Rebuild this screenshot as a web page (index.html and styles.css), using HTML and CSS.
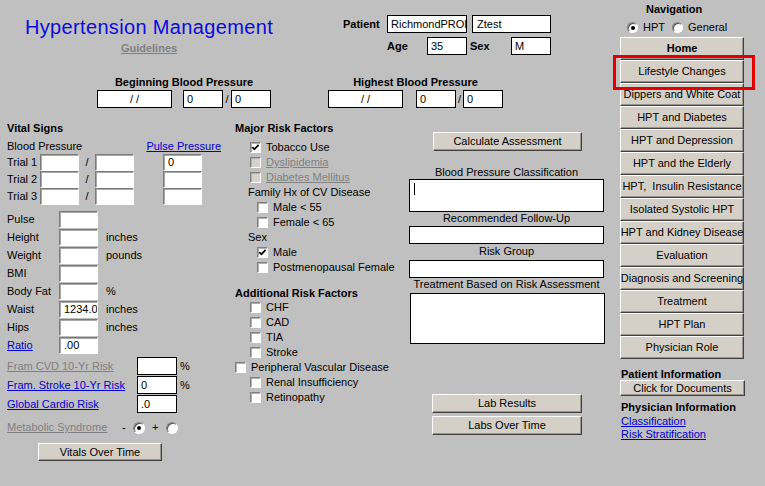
FILE: index.html
```html
<!DOCTYPE html>
<html>
<head>
<meta charset="utf-8">
<title>Hypertension Management</title>
<link rel="stylesheet" href="styles.css">
</head>
<body>
<div class="page">
  <div class="main">
    <header class="top">
      <div class="title-block">
        <h1 class="title">Hypertension Management</h1>
        <a class="guidelines">Guidelines</a>
      </div>
      <div class="patient">
        <div class="prow">
          <span class="plabel">Patient</span>
          <span class="field f-first">RichmondPROD</span>
          <span class="field f-last">Ztest</span>
        </div>
        <div class="prow prow2">
          <span class="plabel2">Age</span>
          <span class="field f-small">35</span>
          <span class="plabel3">Sex</span>
          <span class="field f-small">M</span>
        </div>
      </div>
    </header>

    <section class="bp">
      <div class="bp-group">
        <div class="bold bp-title">Beginning Blood Pressure</div>
        <div class="bp-inputs">
          <span class="field date">/ /</span>
          <span class="field num first-num">0</span>
          <span class="slash">/</span>
          <span class="field num">0</span>
        </div>
      </div>
      <div class="bp-group">
        <div class="bold bp-title">Highest Blood Pressure</div>
        <div class="bp-inputs">
          <span class="field date">/ /</span>
          <span class="field num first-num2">0</span>
          <span class="slash slash2">/</span>
          <span class="field num">0</span>
        </div>
      </div>
    </section>

    <div class="cols">
      <div class="vitals">
        <div class="bold head">Vital Signs</div>
        <div class="bp-head"><span>Blood Pressure</span><a class="link">Pulse Pressure</a></div>
        <div class="trials">
          <span>Trial 1</span><span class="inset"></span><span class="sl">/</span><span class="inset"></span><span></span><span class="inset">0</span>
          <span>Trial 2</span><span class="inset"></span><span class="sl">/</span><span class="inset"></span><span></span><span class="inset"></span>
          <span>Trial 3</span><span class="inset"></span><span class="sl">/</span><span class="inset"></span><span></span><span class="inset"></span>
        </div>
        <div class="measures">
          <span>Pulse</span><span class="inset"></span><span class="unit"></span>
          <span>Height</span><span class="inset"></span><span class="unit">inches</span>
          <span>Weight</span><span class="inset"></span><span class="unit">pounds</span>
          <span>BMI</span><span class="inset"></span><span class="unit"></span>
          <span>Body Fat</span><span class="inset"></span><span class="unit">%</span>
          <span>Waist</span><span class="inset">1234.00</span><span class="unit">inches</span>
          <span>Hips</span><span class="inset"></span><span class="unit">inches</span>
          <span><a class="link">Ratio</a></span><span class="inset">.00</span><span class="unit"></span>
        </div>
        <div class="fram">
          <span><a class="dis-link">Fram CVD 10-Yr Risk</a></span><span class="field"></span><span class="unit2">%</span>
          <span><a class="link">Fram. Stroke 10-Yr Risk</a></span><span class="field">0</span><span class="unit2">%</span>
          <span><a class="link">Global Cardio Risk</a></span><span class="field">.0</span><span class="unit2"></span>
        </div>
        <div class="meta">
          <a class="dis-link meta-label">Metabolic Syndrome</a>
          <span class="minus">-</span>
          <span class="radio"><span class="dot"></span></span>
          <span class="plus">+</span>
          <span class="radio"></span>
        </div>
        <div class="btn vot">Vitals Over Time</div>
      </div>

      <div class="risk">
        <div class="bold head">Major Risk Factors</div>
        <div class="cb-row i15 first-row"><span class="cb"><svg viewBox="0 0 9 9" width="9" height="9"><path d="M1.3 4.1 L3.4 6.3 L7.6 1.8" fill="none" stroke="#000" stroke-width="1.8"/></svg></span><span>Tobacco Use</span></div>
        <div class="cb-row i15"><span class="cb dis"></span><a class="dis-link">Dyslipidemia</a></div>
        <div class="cb-row i15"><span class="cb dis"></span><a class="dis-link">Diabetes Mellitus</a></div>
        <div class="cb-row i13">Family Hx of CV Disease</div>
        <div class="cb-row i22"><span class="cb"></span><span>Male &lt; 55</span></div>
        <div class="cb-row i22"><span class="cb"></span><span>Female &lt; 65</span></div>
        <div class="cb-row i13">Sex</div>
        <div class="cb-row i22"><span class="cb"><svg viewBox="0 0 9 9" width="9" height="9"><path d="M1.3 4.1 L3.4 6.3 L7.6 1.8" fill="none" stroke="#000" stroke-width="1.8"/></svg></span><span>Male</span></div>
        <div class="cb-row i22"><span class="cb"></span><span>Postmenopausal Female</span></div>

        <div class="bold head add-head">Additional Risk Factors</div>
        <div class="cb-row i15"><span class="cb"></span><span>CHF</span></div>
        <div class="cb-row i15"><span class="cb"></span><span>CAD</span></div>
        <div class="cb-row i15"><span class="cb"></span><span>TIA</span></div>
        <div class="cb-row i15"><span class="cb"></span><span>Stroke</span></div>
        <div class="cb-row i0"><span class="cb"></span><span>Peripheral Vascular Disease</span></div>
        <div class="cb-row i15"><span class="cb"></span><span>Renal Insufficiency</span></div>
        <div class="cb-row i15"><span class="cb"></span><span>Retinopathy</span></div>
      </div>

      <div class="assess">
        <div class="btn calc">Calculate Assessment</div>
        <div class="a-label a-first">Blood Pressure Classification</div>
        <div class="abox box-class"><span class="caret"></span></div>
        <div class="a-label">Recommended Follow-Up</div>
        <div class="abox box-follow"></div>
        <div class="a-label a-gap">Risk Group</div>
        <div class="abox box-risk"></div>
        <div class="a-label a-gap0">Treatment Based on Risk Assessment</div>
        <div class="abox box-treat"></div>
        <div class="btn lab lab1">Lab Results</div>
        <div class="btn lab lab2">Labs Over Time</div>
      </div>
    </div>
  </div>

  <aside class="nav">
    <div class="bold nav-title">Navigation</div>
    <div class="nav-radios">
      <span class="radio"><span class="dot"></span></span><span class="rlabel">HPT</span>
      <span class="radio r2"></span><span class="rlabel">General</span>
    </div>
    <div class="nav-buttons">
      <div class="btn nbtn bold">Home</div>
      <div class="btn nbtn">Lifestyle Changes</div>
      <div class="btn nbtn">Dippers and White Coat</div>
      <div class="btn nbtn">HPT and Diabetes</div>
      <div class="btn nbtn">HPT and Depression</div>
      <div class="btn nbtn">HPT and the Elderly</div>
      <div class="btn nbtn">HPT,&nbsp; Insulin Resistance</div>
      <div class="btn nbtn">Isolated Systolic HPT</div>
      <div class="btn nbtn">HPT and Kidney Disease</div>
      <div class="btn nbtn">Evaluation</div>
      <div class="btn nbtn">Diagnosis and Screening</div>
      <div class="btn nbtn">Treatment</div>
      <div class="btn nbtn">HPT Plan</div>
      <div class="btn nbtn">Physician Role</div>
    </div>
    <div class="bold info-head">Patient Information</div>
    <div class="btn docs">Click for Documents</div>
    <div class="bold info-head2">Physician Information</div>
    <a class="link nav-link first-link">Classification</a>
    <a class="link nav-link">Risk Stratification</a>
    <div class="annot"></div>
  </aside>
</div>
</body>
</html>
```

FILE: styles.css
```css
* { box-sizing: border-box; }
html, body { margin: 0; padding: 0; }
body {
  background: #c0c0c0;
  font-family: "Liberation Sans", Arial, sans-serif;
  font-size: 11px;
  line-height: 13px;
  color: #000;
  width: 765px;
  height: 486px;
  overflow: hidden;
}
.page { display: flex; width: 765px; height: 486px; }
.main { width: 612px; }
.nav { width: 153px; position: relative; }
.bold { font-weight: bold; }

/* header */
.top { display: flex; height: 76px; }
.title-block { margin-left: 24px; width: 250px; text-align: center; }
.title {
  margin: 15px 0 0;
  font-size: 20px;
  line-height: 24px;
  font-weight: normal;
  color: #0b0bdc;
  letter-spacing: 0.35px;
  white-space: nowrap;
}
.guidelines {
  display: block;
  margin-top: 3px;
  font-weight: bold;
  color: #808080;
  text-decoration: underline;
}
.patient { margin-left: 69px; margin-top: 15px; }
.prow { display: flex; align-items: center; height: 18px; }
.prow2 { margin-top: 4px; margin-left: 44px; }
.plabel { width: 44px; font-weight: bold; }
.plabel2 { width: 40px; font-weight: bold; }
.plabel3 { width: 44px; padding-left: 3px; font-weight: bold; }

.field {
  display: block;
  height: 18px;
  background: #fff;
  border: 1px solid #000;
  line-height: 16px;
  padding: 0 3px;
  white-space: nowrap;
  overflow: hidden;
}
.f-first { width: 80px; }
.f-last { width: 79px; margin-left: 5px; padding-left: 4px; }
.f-small { width: 40px; }

/* blood pressure row */
.bp { display: flex; padding-left: 97px; gap: 57px; }
.bp-group { display: flex; flex-direction: column; align-items: center; }
.bp-title { white-space: nowrap; }
.bp-inputs { display: flex; align-items: center; margin-top: 1px; }
.date { width: 75px; text-align: center; }
.num { width: 40px; }
.first-num { margin-left: 11px; }
.first-num2 { margin-left: 13px; }
.slash { width: 8px; text-align: center; }
.slash2 { width: 7px; }

/* columns */
.cols { display: flex; margin-top: 14px; }
.vitals { width: 228px; padding-left: 7px; }
.risk { width: 177px; padding-left: 7px; }
.assess { width: 207px; }

.link { color: #0000cc; text-decoration: underline; white-space: nowrap; }
.dis-link { color: #808080; text-decoration: underline; white-space: nowrap; }

.bp-head { display: flex; justify-content: space-between; width: 214px; margin-top: 5px; }
.trials {
  display: grid;
  grid-template-columns: 33px 39px 16px 39px 29px 39px;
  grid-auto-rows: 17px;
  margin-top: 1px;
  align-items: center;
}
.sl { text-align: center; }
.inset {
  display: block;
  height: 17px;
  background: #fff;
  border-style: solid;
  border-width: 1px;
  border-color: #7b7b7b #fff #fff #7b7b7b;
  box-shadow: inset 1px 1px 0 #a8a8a8;
  line-height: 15px;
  padding: 0 4px;
  white-space: nowrap;
  overflow: hidden;
}
.measures {
  display: grid;
  grid-template-columns: 52px 39px auto;
  grid-auto-rows: 17px;
  row-gap: 1px;
  margin-top: 6px;
  align-items: center;
}
.unit { padding-left: 8px; }
.fram {
  display: grid;
  grid-template-columns: 130px 40px auto;
  grid-auto-rows: 18px;
  row-gap: 1px;
  margin-top: 3px;
  align-items: center;
}
.fram .field { height: 18px; }
.unit2 { padding-left: 3px; }
.meta { display: flex; align-items: center; height: 13px; margin-top: 8px; }
.meta-label { width: 115px; }
.minus { width: 11px; }
.plus { width: 8px; margin-left: 7px; }
.meta .radio + .plus + .radio { margin-left: 6px; }

.radio {
  display: inline-flex;
  align-items: center;
  justify-content: center;
  width: 12px;
  height: 12px;
  border-radius: 50%;
  background: #fff;
  border: 1px solid;
  border-color: #808080 #fff #fff #808080;
  box-shadow: inset 1px 1px 0 #505050;
  flex: none;
}
.dot { width: 4px; height: 4px; border-radius: 50%; background: #000; }

.btn {
  display: flex;
  align-items: center;
  justify-content: center;
  background: #d4d0c8;
  border: 1px solid;
  border-color: #fff #404040 #404040 #fff;
  box-shadow: inset -1px -1px 0 #9a968f;
  white-space: nowrap;
  color: #000;
}
.vot { width: 124px; height: 18px; margin-left: 31px; margin-top: 9px; }

/* risk factors */
.first-row { margin-top: 5px; }
.cb-row { display: flex; align-items: center; height: 15px; white-space: nowrap; }
.i0 { padding-left: 0; }
.i13 { padding-left: 13px; }
.i15 { padding-left: 15px; }
.i22 { padding-left: 22px; }
.cb {
  display: inline-flex;
  align-items: center;
  justify-content: center;
  width: 11px;
  height: 11px;
  margin-right: 5px;
  background: #fff;
  border-style: solid;
  border-width: 1px;
  border-color: #808080 #fff #fff #808080;
  box-shadow: inset 1px 1px 0 #b0b0b0;
  flex: none;
}
.cb.dis { background: #d6d3cc; }
.add-head { margin-top: 12px; }

/* assessment */
.calc { width: 149px; height: 19px; margin-left: 28px; margin-top: 10px; }
.a-label { width: 195px; margin-left: 4px; text-align: center; white-space: nowrap; }
.a-first { margin-top: 15px; }
.abox { background: #fff; border: 1px solid #000; width: 195px; margin-left: 4px; }
.box-class { height: 33px; padding: 3px 0 0 4px; }
.caret { display: block; width: 1px; height: 12px; background: #000; }
.box-follow { height: 18px; margin-top: 1px; }
.a-gap { margin-top: 1px; }
.box-risk { height: 18px; margin-top: 2px; }
.box-treat { height: 51px; margin-top: 2px; margin-left: 5px; }
.lab { width: 150px; height: 19px; margin-left: 27px; }
.lab1 { margin-top: 50px; }
.lab2 { margin-top: 3px; }

/* navigation */
.nav-title { margin-top: 3px; padding-left: 34px; }
.nav-radios { display: flex; align-items: center; height: 15px; margin-top: 4px; padding-left: 15px; }
.nav-radios .radio { width: 11px; height: 11px; }
.rlabel { margin-left: 5px; }
.r2 { margin-left: 7px; }
.nav-buttons { margin-top: 2px; margin-left: 8px; width: 124px; }
.nbtn { height: 23px; }
.info-head { margin-top: 9px; margin-left: 9px; line-height: 12px; }
.docs { width: 125px; height: 16px; margin-left: 8px; }
.info-head2 { margin-top: 5px; margin-left: 9px; }
.nav-link { display: block; margin-left: 9px; }
.first-link { margin-top: 1px; }
.annot {
  position: absolute;
  left: 1px;
  top: 55px;
  width: 142px;
  height: 35px;
  border: 3px solid #e30000;
}
```
